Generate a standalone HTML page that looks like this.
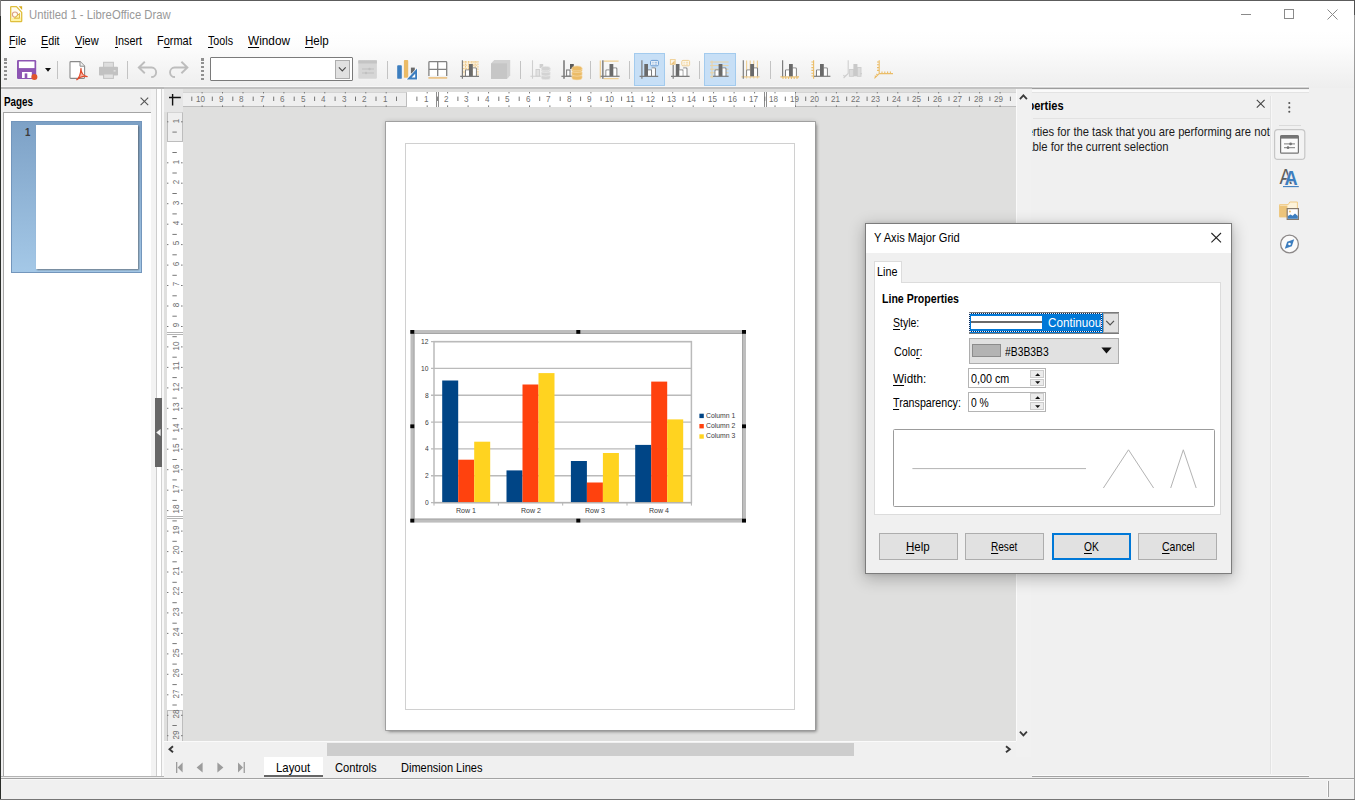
<!DOCTYPE html>
<html>
<head>
<meta charset="utf-8">
<title>Untitled 1 - LibreOffice Draw</title>
<style>
*{box-sizing:border-box;margin:0;padding:0}
html,body{width:1355px;height:800px;overflow:hidden;background:#f0f0f0;font-family:"Liberation Sans",sans-serif;font-size:12px;color:#000}
.abs{position:absolute}
#win{position:absolute;left:0;top:0;width:1355px;height:800px;background:#f0f0f0;overflow:hidden}
.t{position:absolute;white-space:nowrap;transform-origin:0 0;line-height:normal}
.t u{text-decoration:underline;text-decoration-thickness:1px;text-underline-offset:1.5px}
.sep{position:absolute;top:61px;width:1px;height:18px;background:#c3c3c3}
svg{position:absolute;overflow:visible}
</style>
</head>
<body>
<div id="win">
<!-- TITLEBAR / MENUBAR -->
<div class="abs" style="left:1px;top:1px;width:1353px;height:29px;background:#ffffff;"></div>
<div class="abs" style="left:1px;top:30px;width:1353px;height:58px;background:linear-gradient(#ffffff 0%,#fdfdfd 25%,#f4f4f4 70%,#eeeeee 100%);"></div>
<svg style="left:9px;top:5px" width="15" height="18" viewBox="0 0 15 18">
<path d="M1.7 2.2 Q1.7 1.6 2.3 1.6 H7.5 L12.7 7.4 V16 Q12.7 16.7 12 16.7 H2.4 Q1.7 16.7 1.7 16 Z" fill="#fffdf0" stroke="#dfbe3c" stroke-width="1.3" stroke-linejoin="round"/>
<path d="M2.5 12.6 H12 V16 H2.5 Z" fill="#fff4a4"/>
<path d="M9.7 1.3 H13.1 V5.1 Z" fill="#d6ae22"/>
<circle cx="6" cy="9.6" r="2.6" fill="none" stroke="#dba088" stroke-width="1.1"/>
<path d="M5.4 13.2 H10.6 V8.4 Z" fill="#fdf1a8" stroke="#dcb73a" stroke-width="1"/>
</svg>
<span class="t" style="left:29.2px;top:8.0px;font-size:12.2px;color:#999999;transform:scaleX(0.927);">Untitled 1 - LibreOffice Draw</span>
<div class="abs" style="left:1241px;top:14px;width:10px;height:1px;background:#8a8a8a;"></div>
<div class="abs" style="left:1284px;top:9px;width:10px;height:10px;border:1px solid #8a8a8a"></div>
<svg style="left:1327px;top:9px" width="11" height="11" viewBox="0 0 11 11"><path d="M0.5 0.5 L10.5 10.5 M10.5 0.5 L0.5 10.5" stroke="#8a8a8a" stroke-width="1" fill="none"/></svg>
<span class="t" style="left:8.8px;top:34.0px;font-size:12.2px;color:#000;transform:scaleX(0.875);"><u>F</u>ile</span>
<span class="t" style="left:41.2px;top:34.0px;font-size:12.2px;color:#000;transform:scaleX(0.885);"><u>E</u>dit</span>
<span class="t" style="left:75.3px;top:34.0px;font-size:12.2px;color:#000;transform:scaleX(0.900);"><u>V</u>iew</span>
<span class="t" style="left:114.6px;top:34.0px;font-size:12.2px;color:#000;transform:scaleX(0.888);"><u>I</u>nsert</span>
<span class="t" style="left:157.2px;top:34.0px;font-size:12.2px;color:#000;transform:scaleX(0.898);">F<u>o</u>rmat</span>
<span class="t" style="left:207.6px;top:34.0px;font-size:12.2px;color:#000;transform:scaleX(0.878);"><u>T</u>ools</span>
<span class="t" style="left:248.0px;top:34.0px;font-size:12.2px;color:#000;transform:scaleX(0.968);"><u>W</u>indow</span>
<span class="t" style="left:305.0px;top:34.0px;font-size:12.2px;color:#000;transform:scaleX(0.949);"><u>H</u>elp</span>
<!-- TOOLBAR -->
<div class="abs" style="left:1px;top:86px;width:1307px;height:1px;background:#f7f7f7;"></div>
<div class="abs" style="left:1px;top:87px;width:1031px;height:2px;background:#c2c2c2;"></div>
<div class="abs" style="left:1px;top:87px;width:163px;height:2px;background:#b8b8b8;"></div>
<div class="abs" style="left:1032px;top:87px;width:276.5px;height:1px;background:#d2d2d2;"></div>
<div class="abs" style="left:1032px;top:88px;width:276.5px;height:1px;background:#9c9c9c;"></div>
<div class="abs" style="left:4px;top:58.4px;width:2.6px;height:2.2px;background:#909090;"></div>
<div class="abs" style="left:4px;top:62.25px;width:2.6px;height:2.2px;background:#909090;"></div>
<div class="abs" style="left:4px;top:66.1px;width:2.6px;height:2.2px;background:#909090;"></div>
<div class="abs" style="left:4px;top:69.95px;width:2.6px;height:2.2px;background:#909090;"></div>
<div class="abs" style="left:4px;top:73.8px;width:2.6px;height:2.2px;background:#909090;"></div>
<div class="abs" style="left:4px;top:77.65px;width:2.6px;height:2.2px;background:#909090;"></div>
<div class="abs" style="left:201px;top:58.4px;width:2.6px;height:2.2px;background:#909090;"></div>
<div class="abs" style="left:201px;top:62.25px;width:2.6px;height:2.2px;background:#909090;"></div>
<div class="abs" style="left:201px;top:66.1px;width:2.6px;height:2.2px;background:#909090;"></div>
<div class="abs" style="left:201px;top:69.95px;width:2.6px;height:2.2px;background:#909090;"></div>
<div class="abs" style="left:201px;top:73.8px;width:2.6px;height:2.2px;background:#909090;"></div>
<div class="abs" style="left:201px;top:77.65px;width:2.6px;height:2.2px;background:#909090;"></div>
<div class="sep" style="left:57px"></div>
<div class="sep" style="left:127px"></div>
<div class="sep" style="left:387px"></div>
<div class="sep" style="left:520px"></div>
<div class="sep" style="left:590px"></div>
<div class="sep" style="left:629px"></div>
<div class="sep" style="left:699px"></div>
<div class="sep" style="left:770px"></div>
<div class="abs" style="left:634px;top:53px;width:31px;height:32.5px;background:#c7dff6;border:1px solid #a3cbee"></div>
<div class="abs" style="left:704px;top:53px;width:31.5px;height:32.5px;background:#c7dff6;border:1px solid #a3cbee"></div>
<div class="abs" style="left:209.6px;top:57.4px;width:143.4px;height:23.6px;background:#fff;border:1px solid #7a7a7a;border-radius:1px"></div>
<div class="abs" style="left:334.5px;top:59.8px;width:15.6px;height:19px;background:#e1e1e1;border:1px solid #adadad"></div>
<svg style="left:0;top:0" width="1355" height="90" viewBox="0 0 1355 90">
<path d="M338.9 67.4 L342.3 71 L345.7 67.4" fill="none" stroke="#4a4a4a" stroke-width="1.1"/>
<rect x="17" y="60" width="19.2" height="19" rx="1.2" fill="#8d55b3"/><rect x="18.9" y="61.5" width="15.6" height="6.6" fill="#fff"/><rect x="22" y="72" width="9.8" height="6" fill="#fff"/><rect x="24.7" y="73.4" width="2.6" height="4.6" fill="#8d55b3"/><circle cx="34.4" cy="77" r="3" fill="#e0542c"/>
<path d="M45 68 H51 L48 71.8 Z" fill="#111"/>
<path d="M70 62.4 Q70 61.6 70.8 61.6 H80 L84.6 66.2 V77.6 Q84.6 78.4 83.8 78.4 H70.8 Q70 78.4 70 77.6 Z" fill="#fff" stroke="#8a8a8a" stroke-width="1.1"/><path d="M80 61.8 V66.2 H84.4" fill="#f4f4f4" stroke="#8a8a8a" stroke-width="1"/><path d="M76.4 80 C79.4 77.4 81 73 81 68.4 C81 72.6 83.2 75.6 87.2 76.6 C83.2 75.6 79.6 77 76.4 80 M80.9 68.4 C80.9 72 80.2 74 79.4 76.4" fill="#f5b5a5" stroke="#e0492a" stroke-width="1.1" stroke-linejoin="round"/>
<rect x="103.6" y="62.3" width="9.8" height="6" fill="#dedede" stroke="#c2c2c2" stroke-width="1"/><rect x="99" y="66.8" width="19" height="8.8" rx="0.8" fill="#c2c2c2"/><rect x="103.6" y="74" width="9.8" height="4.4" fill="#e2e2e2" stroke="#c2c2c2" stroke-width="1"/><rect x="113.6" y="70.4" width="2" height="1" fill="#eee"/>
<path d="M144.8 61.8 L138.8 67.5 L144.8 73.3 M138.8 67.5 H151.6 A4.7 4.7 0 0 1 151.2 77" fill="none" stroke="#bdbdbd" stroke-width="1.9"/><path d="M181.4 61.8 L187.4 67.5 L181.4 73.3 M187.4 67.5 H174.6 A4.7 4.7 0 0 0 175 77" fill="none" stroke="#bdbdbd" stroke-width="1.9"/>
<rect x="358.3" y="60.3" width="18.6" height="18.4" rx="1" fill="#d6d6d6"/><rect x="358.3" y="60.3" width="18.6" height="3.2" fill="#c4c4c4"/><path d="M362 69 H374 M362 73 H374" stroke="#c0c0c0" stroke-width="1"/><circle cx="369.5" cy="69" r="1.2" fill="#c0c0c0"/><circle cx="366" cy="73" r="1.2" fill="#c0c0c0"/>
<rect x="397.2" y="65.2" width="4.6" height="13.6" rx="0.9" fill="#3d7ebf"/><rect x="403.9" y="60" width="4.3" height="17.8" rx="0.9" fill="#ebbb66"/><rect x="410.9" y="67.6" width="3.9" height="6" fill="#696969"/><path d="M405.4 80 L417.6 67 V80 Z" fill="#fff"/><path d="M406.8 79.4 L417 68.6 V79.4 Z M411.6 77.6 H415.2 V73.8 Z" fill="#3d7ebf" fill-rule="evenodd"/>
<rect x="428.8" y="61.6" width="18" height="14" fill="#fff"/><path d="M428.9 76 V62.4 Q428.9 61.6 429.7 61.6 H445.9 Q446.7 61.6 446.7 62.4 V76 M437.7 61.6 V76 M428.9 69.3 H446.7" fill="none" stroke="#828282" stroke-width="1.3"/><rect x="428.4" y="77" width="18.8" height="1.8" fill="#ebc58c"/>
<rect x="463" y="61" width="15" height="15" fill="#fbf1dd"/><path d="M465.5 61 V76 M468.5 61 V76 M472 61 V76 M475.2 61 V76 M478 61 V76 M463 62 H478 M463 65.2 H478 M463 68.6 H478 M463 72 H478" stroke="#efc98a" stroke-width="1" stroke-dasharray="1.6 0.9"/><path d="M465.5 76.3 V70.6 Q465.5 70 466.1 70 H469" fill="#fff" stroke="#7d7d7d" stroke-width="1.1"/><rect x="466" y="70.6" width="3" height="5.6" fill="#fff"/><path d="M472.6 68 H475.6 Q476.3 68 476.3 68.7 V76.3" fill="#fff" stroke="#7d7d7d" stroke-width="1.1"/><rect x="473" y="68.6" width="2.7" height="7.6" fill="#fff"/><rect x="469" y="64" width="3.8" height="12.3" fill="#6a6a6a"/><path d="M462.4 60.3 V78.8 M460.2 76.3 H479" stroke="#7d7d7d" stroke-width="1.2" fill="none"/>
<path d="M491 63.4 L494.2 60 H510.2 V75.6 L507 78.9 H491 Z" fill="#d2d2d2"/><rect x="491" y="63.4" width="16" height="15.5" fill="#c6c6c6"/>
<path d="M532.5 60.3 V78.8 M530.4 76.3 H541" stroke="#cfcfcf" stroke-width="1.1"/><rect x="536" y="69.5" width="3.6" height="6.6" fill="#e2e2e2" stroke="#cfcfcf" stroke-width="1"/><rect x="539.6" y="64" width="3.6" height="4" fill="#cfcfcf"/><path d="M541.2 75.7 v2.2 a4.55 1.9 0 0 0 9.1 0 v-2.2 z" fill="#d3d3d3" stroke="#ececec" stroke-width="0.6"/><path d="M541.2 72 v2.2 a4.55 1.9 0 0 0 9.1 0 v-2.2 z" fill="#d3d3d3" stroke="#ececec" stroke-width="0.6"/><path d="M541.2 68.3 v2.2 a4.55 1.9 0 0 0 9.1 0 v-2.2 z" fill="#d3d3d3" stroke="#ececec" stroke-width="0.6"/><ellipse cx="545.75" cy="68.6" rx="4.55" ry="2.3" fill="#d3d3d3" stroke="#ececec" stroke-width="0.6"/>
<path d="M564 60.3 V78.8" stroke="#8a8a8a" stroke-width="1.8"/><path d="M561.4 76.3 H573" stroke="#7d7d7d" stroke-width="1.2"/><rect x="566.6" y="70" width="3.4" height="6" fill="#fff" stroke="#7d7d7d" stroke-width="1.1"/><rect x="570" y="64" width="3.8" height="5" fill="#5a5a5a"/><path d="M571.9 75.7 v2.2 a5.1 2 0 0 0 10.2 0 v-2.2 z" fill="#ebbb66" stroke="#f6deb0" stroke-width="0.6"/><path d="M571.9 72 v2.2 a5.1 2 0 0 0 10.2 0 v-2.2 z" fill="#ebbb66" stroke="#f6deb0" stroke-width="0.6"/><path d="M571.9 68.3 v2.2 a5.1 2 0 0 0 10.2 0 v-2.2 z" fill="#ebbb66" stroke="#f6deb0" stroke-width="0.6"/><ellipse cx="577" cy="68.4" rx="5.1" ry="2.5" fill="#ebbb66" stroke="#f6deb0" stroke-width="0.6"/>
<path d="M600.3 60.6 V78.6 M603.6 61.2 H618.6 M603.6 78.6 H618.6" stroke="#f0cf92" stroke-width="1.2" fill="none"/><path d="M606.0 76.3 V70.6 Q606.0 70 606.6 70 H609.5" fill="#fff" stroke="#7d7d7d" stroke-width="1.1"/><rect x="606.5" y="70.6" width="3" height="5.6" fill="#fff"/><path d="M613.1 68 H616.1 Q616.8 68 616.8 68.7 V76.3" fill="#fff" stroke="#7d7d7d" stroke-width="1.1"/><rect x="613.5" y="68.6" width="2.7" height="7.6" fill="#fff"/><rect x="609.5" y="64" width="3.8" height="12.3" fill="#6a6a6a"/><path d="M602.8 60.3 V78.8" stroke="#8a8a8a" stroke-width="1.7"/><path d="M600.6 76.3 H619.6" stroke="#7d7d7d" stroke-width="1.2"/>
<rect x="644.3" y="64" width="3.7" height="12.3" fill="#6a6a6a"/><path d="M648.0 70 H651.5 V76.3" fill="#fff" stroke="#7d7d7d" stroke-width="1.1"/><rect x="648.0" y="70.6" width="3" height="5.6" fill="#fff"/><path d="M651.6999999999999 68 H654.6999999999999 Q655.4 68 655.4 68.7 V76.3" fill="#fff" stroke="#7d7d7d" stroke-width="1.1"/><rect x="652.0999999999999" y="68.6" width="2.7" height="7.6" fill="#fff"/><path d="M641.9 60.3 V78.8 M639.6 76.3 H658.2" stroke="#7d7d7d" stroke-width="1.2"/><rect x="650.6" y="60.4" width="7.8" height="5.4" rx="1.2" fill="#eef4fb" stroke="#6a9bd0" stroke-width="1"/><path d="M652.3 62.3 H653.6 M654.6 62.3 H657 M652.3 64.1 H653.6 M654.6 64.1 H657" stroke="#7aa6d6" stroke-width="0.8"/>
<rect x="675.8" y="64" width="3.7" height="12.3" fill="#6a6a6a"/><path d="M679.5 70 H683.0 V76.3" fill="#fff" stroke="#7d7d7d" stroke-width="1.1"/><rect x="679.5" y="70.6" width="3" height="5.6" fill="#fff"/><path d="M683.1999999999999 68 H686.1999999999999 Q686.9 68 686.9 68.7 V76.3" fill="#fff" stroke="#7d7d7d" stroke-width="1.1"/><rect x="683.5999999999999" y="68.6" width="2.7" height="7.6" fill="#fff"/><path d="M673.2 65 V78.8 M671 76.3 H689.6" stroke="#7d7d7d" stroke-width="1.2"/><rect x="670.4" y="59.6" width="4.8" height="4.8" fill="#fdf6e6" stroke="#efcf94" stroke-width="1"/><path d="M674.6 60.6 V64 H671.2 Z" fill="#ecc27a"/><rect x="681.8" y="60.4" width="7.8" height="5.4" rx="1.2" fill="#fdf8ee" stroke="#efcf94" stroke-width="1"/><path d="M683.5 62.3 H684.8 M685.8 62.3 H688.2 M683.5 64.1 H684.8 M685.8 64.1 H688.2" stroke="#efcf94" stroke-width="0.8"/>
<path d="M710 62 H728.6 M710 65.6 H728.6 M710 69.2 H728.6 M710 72.8 H728.6 M712 60.6 V78.4" stroke="#ead2a2" stroke-width="1"/><path d="M710 76.8 H713" stroke="#ead2a2" stroke-width="1"/><path d="M715.1 76.3 V70.6 Q715.1 70 715.7 70 H718.6" fill="#fff" stroke="#7d7d7d" stroke-width="1.1"/><rect x="715.6" y="70.6" width="3" height="5.6" fill="#fff"/><path d="M722.2 68 H725.2 Q725.9 68 725.9 68.7 V76.3" fill="#fff" stroke="#7d7d7d" stroke-width="1.1"/><rect x="722.6" y="68.6" width="2.7" height="7.6" fill="#fff"/><rect x="718.6" y="64" width="3.8" height="12.3" fill="#6a6a6a"/><path d="M713 76.3 H728.6" stroke="#7d7d7d" stroke-width="1.2"/>
<path d="M746.6 60.4 V78.4 M750.2 60.4 V78.4 M753.8 60.4 V78.4 M757.4 60.4 V78.4 M741.4 76.9 H759.6" stroke="#f0cf92" stroke-width="1.1"/><path d="M746.7 76.3 V70.6 Q746.7 70 747.3000000000001 70 H750.2" fill="#fff" stroke="#7d7d7d" stroke-width="1.1"/><rect x="747.2" y="70.6" width="3" height="5.6" fill="#fff"/><path d="M753.8000000000001 68 H756.8000000000001 Q757.5 68 757.5 68.7 V76.3" fill="#fff" stroke="#7d7d7d" stroke-width="1.1"/><rect x="754.2" y="68.6" width="2.7" height="7.6" fill="#fff"/><rect x="750.2" y="64" width="3.8" height="12.3" fill="#6a6a6a"/><path d="M743.3 60.3 V78.8" stroke="#7d7d7d" stroke-width="1.2"/>
<path d="M780.4 76.9 H799 M783 77 V79 M785.8 77 V79 M788.6 77 V79 M791.4 77 V79 M794.2 77 V79 M797 77 V79" stroke="#ebbd68" stroke-width="1.1"/><path d="M785.5 76.3 V70.6 Q785.5 70 786.1 70 H789" fill="#fff" stroke="#7d7d7d" stroke-width="1.1"/><rect x="786" y="70.6" width="3" height="5.6" fill="#fff"/><path d="M792.6 68 H795.6 Q796.3 68 796.3 68.7 V76.3" fill="#fff" stroke="#7d7d7d" stroke-width="1.1"/><rect x="793" y="68.6" width="2.7" height="7.6" fill="#fff"/><rect x="789" y="64" width="3.8" height="12.3" fill="#6a6a6a"/><path d="M782.6 60.3 V76.6" stroke="#7d7d7d" stroke-width="1.2"/>
<path d="M813.6 60.3 V78.8 M811.4 62 H813.6 M811.4 64.8 H813.6 M811.4 67.6 H813.6 M811.4 70.4 H813.6 M811.4 73.2 H813.6 M811.4 76 H813.6" stroke="#ebbd68" stroke-width="1.1"/><path d="M816.5 76.3 V70.6 Q816.5 70 817.1 70 H820" fill="#fff" stroke="#7d7d7d" stroke-width="1.1"/><rect x="817" y="70.6" width="3" height="5.6" fill="#fff"/><path d="M823.6 68 H826.6 Q827.3 68 827.3 68.7 V76.3" fill="#fff" stroke="#7d7d7d" stroke-width="1.1"/><rect x="824" y="68.6" width="2.7" height="7.6" fill="#fff"/><rect x="820" y="64" width="3.8" height="12.3" fill="#6a6a6a"/><path d="M814 76.3 H830.4" stroke="#7d7d7d" stroke-width="1.2"/>
<rect x="849.4" y="69.5" width="4" height="6.8" fill="#dcdcdc" stroke="#cfcfcf" stroke-width="1"/><rect x="857.4" y="67.5" width="3.6" height="8.8" fill="#dcdcdc" stroke="#cfcfcf" stroke-width="1"/><rect x="853.4" y="64" width="4" height="12.3" fill="#c9c9c9"/><path d="M848.2 60.3 V73.4 L843.6 78 M843.4 75.2 l1.3 1.5 l1.3 -1.5 M860 73.6 H862" stroke="#cfcfcf" stroke-width="1.1" fill="none"/>
<path d="M879.2 60.3 V73.6 H893 M879.2 73.6 L874.4 78.4 M877 62 H879.2 M877 64.8 H879.2 M877 67.6 H879.2 M877 70.4 H879.2 M882 73.6 V71.6 M884.8 73.6 V71.6 M887.6 73.6 V71.6 M890.4 73.6 V71.6 M877.6 75.2 L876.4 74 M876 76.8 L874.8 75.6" stroke="#ebbd68" stroke-width="1.1" fill="none"/>
</svg>
<!-- LEFT PANE -->
<span class="t" style="left:4.2px;top:95.0px;font-size:12.2px;color:#000;transform:scaleX(0.810);font-weight:bold;">Pages</span>
<svg style="left:140px;top:97px" width="9" height="9" viewBox="0 0 9 9"><path d="M0.6 0.6 L8.2 8.2 M8.2 0.6 L0.6 8.2" stroke="#555" stroke-width="1.1" fill="none"/></svg>
<div class="abs" style="left:3px;top:112px;width:148.3px;height:663.6px;background:#ffffff;border-top:1px solid #a5a5a5;border-left:1px solid #a9a9a9"></div>
<div class="abs" style="left:1px;top:775.6px;width:162.6px;height:1px;background:#b4b4b4;"></div>
<div class="abs" style="left:11.2px;top:120.8px;width:131.2px;height:152.6px;background:linear-gradient(#7da1c6,#a4c8e7);border:1px solid #7396bc"></div>
<div class="abs" style="left:35.5px;top:124.8px;width:102.8px;height:144.6px;background:#ffffff;box-shadow:1px 1px 1.5px rgba(60,60,60,.55)"></div>
<span class="t" style="left:24.8px;top:125.0px;font-size:11.6px;color:#3c3c3c;transform:scaleX(0.837);font-weight:bold;">1</span>
<div class="abs" style="left:151.3px;top:89px;width:13px;height:686.6px;background:#f3f3f3;"></div>
<div class="abs" style="left:155.7px;top:89px;width:1px;height:686.6px;background:#cdcdcd;"></div>
<div class="abs" style="left:156.7px;top:89px;width:4.5px;height:686.6px;background:#ffffff;"></div>
<div class="abs" style="left:161.2px;top:89px;width:1.2px;height:686.6px;background:#d2d2d2;"></div>
<div class="abs" style="left:162.4px;top:89px;width:1.6px;height:686.6px;background:#f8f8f8;"></div>
<div class="abs" style="left:155px;top:398px;width:7px;height:69px;background:#666666;"></div>
<svg style="left:155px;top:428px" width="7" height="9" viewBox="0 0 7 9"><path d="M5.6 1 V8 L1.2 4.5 Z" fill="#f4f4f4"/></svg>
<!-- WORKSPACE -->
<div class="abs" style="left:164px;top:89px;width:852px;height:652px;background:#dfdfde;"></div>
<div class="abs" style="left:164px;top:89px;width:19px;height:23px;background:#e6e6e6;"></div>
<svg style="left:168px;top:93px" width="15" height="14" viewBox="0 0 15 14"><path d="M1 4.5 H12.8 M4.6 1 V12.5" stroke="#111" stroke-width="1.4" fill="none"/></svg>
<div class="abs" style="left:183px;top:92px;width:833px;height:15px;background:#ffffff;"></div>
<div class="abs" style="left:183px;top:92px;width:223.5px;height:15px;background:#efefef;border:1px solid #bdbdbd;border-left:none;border-top-color:#d4d4d4"></div>
<div class="abs" style="left:794.5px;top:92px;width:221.5px;height:15px;background:#efefef;border:1px solid #bdbdbd;border-right:none;border-top-color:#d4d4d4"></div>
<div class="abs" style="left:436px;top:92px;width:1px;height:15px;background:#8e8e8e;"></div>
<div class="abs" style="left:438px;top:92px;width:1px;height:15px;background:#8e8e8e;"></div>
<div class="abs" style="left:764px;top:92px;width:1px;height:15px;background:#8e8e8e;"></div>
<div class="abs" style="left:766px;top:92px;width:1px;height:15px;background:#8e8e8e;"></div>
<span class="t" style="left:196.2px;top:93.0px;font-size:9.6px;color:#727272;transform:scaleX(0.843);">10</span>
<span class="t" style="left:218.9px;top:93.0px;font-size:9.6px;color:#727272;transform:scaleX(0.843);">9</span>
<span class="t" style="left:239.3px;top:93.0px;font-size:9.6px;color:#727272;transform:scaleX(0.843);">8</span>
<span class="t" style="left:259.8px;top:93.0px;font-size:9.6px;color:#727272;transform:scaleX(0.843);">7</span>
<span class="t" style="left:280.3px;top:93.0px;font-size:9.6px;color:#727272;transform:scaleX(0.843);">6</span>
<span class="t" style="left:300.7px;top:93.0px;font-size:9.6px;color:#727272;transform:scaleX(0.843);">5</span>
<span class="t" style="left:321.2px;top:93.0px;font-size:9.6px;color:#727272;transform:scaleX(0.843);">4</span>
<span class="t" style="left:341.7px;top:93.0px;font-size:9.6px;color:#727272;transform:scaleX(0.843);">3</span>
<span class="t" style="left:362.1px;top:93.0px;font-size:9.6px;color:#727272;transform:scaleX(0.843);">2</span>
<span class="t" style="left:382.6px;top:93.0px;font-size:9.6px;color:#727272;transform:scaleX(0.843);">1</span>
<span class="t" style="left:423.5px;top:93.0px;font-size:9.6px;color:#727272;transform:scaleX(0.843);">1</span>
<span class="t" style="left:444.0px;top:93.0px;font-size:9.6px;color:#727272;transform:scaleX(0.843);">2</span>
<span class="t" style="left:464.4px;top:93.0px;font-size:9.6px;color:#727272;transform:scaleX(0.843);">3</span>
<span class="t" style="left:484.9px;top:93.0px;font-size:9.6px;color:#727272;transform:scaleX(0.843);">4</span>
<span class="t" style="left:505.4px;top:93.0px;font-size:9.6px;color:#727272;transform:scaleX(0.843);">5</span>
<span class="t" style="left:525.8px;top:93.0px;font-size:9.6px;color:#727272;transform:scaleX(0.843);">6</span>
<span class="t" style="left:546.3px;top:93.0px;font-size:9.6px;color:#727272;transform:scaleX(0.843);">7</span>
<span class="t" style="left:566.8px;top:93.0px;font-size:9.6px;color:#727272;transform:scaleX(0.843);">8</span>
<span class="t" style="left:587.2px;top:93.0px;font-size:9.6px;color:#727272;transform:scaleX(0.843);">9</span>
<span class="t" style="left:605.4px;top:93.0px;font-size:9.6px;color:#727272;transform:scaleX(0.843);">10</span>
<span class="t" style="left:625.9px;top:93.0px;font-size:9.6px;color:#727272;transform:scaleX(0.903);">11</span>
<span class="t" style="left:646.4px;top:93.0px;font-size:9.6px;color:#727272;transform:scaleX(0.843);">12</span>
<span class="t" style="left:666.8px;top:93.0px;font-size:9.6px;color:#727272;transform:scaleX(0.843);">13</span>
<span class="t" style="left:687.3px;top:93.0px;font-size:9.6px;color:#727272;transform:scaleX(0.843);">14</span>
<span class="t" style="left:707.7px;top:93.0px;font-size:9.6px;color:#727272;transform:scaleX(0.843);">15</span>
<span class="t" style="left:728.2px;top:93.0px;font-size:9.6px;color:#727272;transform:scaleX(0.843);">16</span>
<span class="t" style="left:748.7px;top:93.0px;font-size:9.6px;color:#727272;transform:scaleX(0.843);">17</span>
<span class="t" style="left:769.1px;top:93.0px;font-size:9.6px;color:#727272;transform:scaleX(0.843);">18</span>
<span class="t" style="left:789.6px;top:93.0px;font-size:9.6px;color:#727272;transform:scaleX(0.843);">19</span>
<span class="t" style="left:810.1px;top:93.0px;font-size:9.6px;color:#727272;transform:scaleX(0.843);">20</span>
<span class="t" style="left:830.5px;top:93.0px;font-size:9.6px;color:#727272;transform:scaleX(0.843);">21</span>
<span class="t" style="left:851.0px;top:93.0px;font-size:9.6px;color:#727272;transform:scaleX(0.843);">22</span>
<span class="t" style="left:871.4px;top:93.0px;font-size:9.6px;color:#727272;transform:scaleX(0.843);">23</span>
<span class="t" style="left:891.9px;top:93.0px;font-size:9.6px;color:#727272;transform:scaleX(0.843);">24</span>
<span class="t" style="left:912.4px;top:93.0px;font-size:9.6px;color:#727272;transform:scaleX(0.843);">25</span>
<span class="t" style="left:932.8px;top:93.0px;font-size:9.6px;color:#727272;transform:scaleX(0.843);">26</span>
<span class="t" style="left:953.3px;top:93.0px;font-size:9.6px;color:#727272;transform:scaleX(0.843);">27</span>
<span class="t" style="left:973.8px;top:93.0px;font-size:9.6px;color:#727272;transform:scaleX(0.843);">28</span>
<span class="t" style="left:994.2px;top:93.0px;font-size:9.6px;color:#727272;transform:scaleX(0.843);">29</span>
<div class="abs" style="left:166.5px;top:112px;width:16.5px;height:629px;background:#ffffff;"></div>
<div class="abs" style="left:166.5px;top:112px;width:16.5px;height:30px;background:#efefef;border:1px solid #bdbdbd;border-top-color:#d4d4d4"></div>
<div class="abs" style="left:166.5px;top:710px;width:16.5px;height:31px;background:#efefef;border:1px solid #bdbdbd;border-bottom:none"></div>
<div class="abs" style="left:166.5px;top:332.1px;width:16.5px;height:1px;background:#b4b4b4;"></div>
<div class="abs" style="left:166.5px;top:334.4px;width:16.5px;height:1px;background:#b4b4b4;"></div>
<div class="abs" style="left:166.5px;top:515.9px;width:16.5px;height:1px;background:#b4b4b4;"></div>
<div class="abs" style="left:166.5px;top:517.9px;width:16.5px;height:1px;background:#b4b4b4;"></div>
<svg style="left:0;top:0" width="1355" height="800" viewBox="0 0 1355 800">
<path d="M191.8 96.6 v4.4 M202.1 92 v1.4 M202.1 105.4 v1.6 M212.3 96.6 v4.4 M222.5 92 v1.4 M222.5 105.4 v1.6 M232.8 96.6 v4.4 M243.0 92 v1.4 M243.0 105.4 v1.6 M253.2 96.6 v4.4 M263.5 92 v1.4 M263.5 105.4 v1.6 M273.7 96.6 v4.4 M283.9 92 v1.4 M283.9 105.4 v1.6 M294.2 96.6 v4.4 M304.4 92 v1.4 M304.4 105.4 v1.6 M314.6 96.6 v4.4 M324.8 92 v1.4 M324.8 105.4 v1.6 M335.1 96.6 v4.4 M345.3 92 v1.4 M345.3 105.4 v1.6 M355.5 96.6 v4.4 M365.8 92 v1.4 M365.8 105.4 v1.6 M376.0 96.6 v4.4 M386.2 92 v1.4 M386.2 105.4 v1.6 M396.5 96.6 v4.4 M416.9 96.6 v4.4 M427.2 92 v1.4 M427.2 105.4 v1.6 M437.4 96.6 v4.4 M447.6 92 v1.4 M447.6 105.4 v1.6 M457.9 96.6 v4.4 M468.1 92 v1.4 M468.1 105.4 v1.6 M478.3 96.6 v4.4 M488.6 92 v1.4 M488.6 105.4 v1.6 M498.8 96.6 v4.4 M509.0 92 v1.4 M509.0 105.4 v1.6 M519.2 96.6 v4.4 M529.5 92 v1.4 M529.5 105.4 v1.6 M539.7 96.6 v4.4 M549.9 92 v1.4 M549.9 105.4 v1.6 M560.2 96.6 v4.4 M570.4 92 v1.4 M570.4 105.4 v1.6 M580.6 96.6 v4.4 M590.9 92 v1.4 M590.9 105.4 v1.6 M601.1 96.6 v4.4 M611.3 92 v1.4 M611.3 105.4 v1.6 M621.6 96.6 v4.4 M631.8 92 v1.4 M631.8 105.4 v1.6 M642.0 96.6 v4.4 M652.3 92 v1.4 M652.3 105.4 v1.6 M662.5 96.6 v4.4 M672.7 92 v1.4 M672.7 105.4 v1.6 M683.0 96.6 v4.4 M693.2 92 v1.4 M693.2 105.4 v1.6 M703.4 96.6 v4.4 M713.6 92 v1.4 M713.6 105.4 v1.6 M723.9 96.6 v4.4 M734.1 92 v1.4 M734.1 105.4 v1.6 M744.3 96.6 v4.4 M754.6 92 v1.4 M754.6 105.4 v1.6 M764.8 96.6 v4.4 M775.0 92 v1.4 M775.0 105.4 v1.6 M785.3 96.6 v4.4 M795.5 92 v1.4 M795.5 105.4 v1.6 M805.7 96.6 v4.4 M816.0 92 v1.4 M816.0 105.4 v1.6 M826.2 96.6 v4.4 M836.4 92 v1.4 M836.4 105.4 v1.6 M846.7 96.6 v4.4 M856.9 92 v1.4 M856.9 105.4 v1.6 M867.1 96.6 v4.4 M877.3 92 v1.4 M877.3 105.4 v1.6 M887.6 96.6 v4.4 M897.8 92 v1.4 M897.8 105.4 v1.6 M908.0 96.6 v4.4 M918.3 92 v1.4 M918.3 105.4 v1.6 M928.5 96.6 v4.4 M938.7 92 v1.4 M938.7 105.4 v1.6 M949.0 96.6 v4.4 M959.2 92 v1.4 M959.2 105.4 v1.6 M969.4 96.6 v4.4 M979.7 92 v1.4 M979.7 105.4 v1.6 M989.9 96.6 v4.4 M1000.1 92 v1.4 M1000.1 105.4 v1.6 M1010.4 96.6 v4.4 " stroke="#777" stroke-width="1" fill="none"/>
<path d="M167 121.8 h1.4 M181 121.8 h1.6 M172.4 132.1 h4.4 M172.4 152.5 h4.4 M167 162.8 h1.4 M181 162.8 h1.6 M172.4 173.0 h4.4 M167 183.2 h1.4 M181 183.2 h1.6 M172.4 193.5 h4.4 M167 203.7 h1.4 M181 203.7 h1.6 M172.4 213.9 h4.4 M167 224.2 h1.4 M181 224.2 h1.6 M172.4 234.4 h4.4 M167 244.6 h1.4 M181 244.6 h1.6 M172.4 254.8 h4.4 M167 265.1 h1.4 M181 265.1 h1.6 M172.4 275.3 h4.4 M167 285.5 h1.4 M181 285.5 h1.6 M172.4 295.8 h4.4 M167 306.0 h1.4 M181 306.0 h1.6 M172.4 316.2 h4.4 M167 326.5 h1.4 M181 326.5 h1.6 M172.4 336.7 h4.4 M167 346.9 h1.4 M181 346.9 h1.6 M172.4 357.2 h4.4 M167 367.4 h1.4 M181 367.4 h1.6 M172.4 377.6 h4.4 M167 387.9 h1.4 M181 387.9 h1.6 M172.4 398.1 h4.4 M167 408.3 h1.4 M181 408.3 h1.6 M172.4 418.6 h4.4 M167 428.8 h1.4 M181 428.8 h1.6 M172.4 439.0 h4.4 M167 449.2 h1.4 M181 449.2 h1.6 M172.4 459.5 h4.4 M167 469.7 h1.4 M181 469.7 h1.6 M172.4 479.9 h4.4 M167 490.2 h1.4 M181 490.2 h1.6 M172.4 500.4 h4.4 M167 510.6 h1.4 M181 510.6 h1.6 M172.4 520.9 h4.4 M167 531.1 h1.4 M181 531.1 h1.6 M172.4 541.3 h4.4 M167 551.6 h1.4 M181 551.6 h1.6 M172.4 561.8 h4.4 M167 572.0 h1.4 M181 572.0 h1.6 M172.4 582.3 h4.4 M167 592.5 h1.4 M181 592.5 h1.6 M172.4 602.7 h4.4 M167 612.9 h1.4 M181 612.9 h1.6 M172.4 623.2 h4.4 M167 633.4 h1.4 M181 633.4 h1.6 M172.4 643.6 h4.4 M167 653.9 h1.4 M181 653.9 h1.6 M172.4 664.1 h4.4 M167 674.3 h1.4 M181 674.3 h1.6 M172.4 684.6 h4.4 M167 694.8 h1.4 M181 694.8 h1.6 M172.4 705.0 h4.4 M167 715.3 h1.4 M181 715.3 h1.6 M172.4 725.5 h4.4 M167 735.7 h1.4 M181 735.7 h1.6 " stroke="#777" stroke-width="1" fill="none"/>
</svg>
<span class="t" style="left:174.6px;top:120.6px;font-size:9.8px;color:#6e6e6e;transform:translate(-50%,-50%) rotate(-90deg) scaleX(0.826);transform-origin:50% 50%">1</span>
<span class="t" style="left:174.6px;top:161.6px;font-size:9.8px;color:#6e6e6e;transform:translate(-50%,-50%) rotate(-90deg) scaleX(0.826);transform-origin:50% 50%">1</span>
<span class="t" style="left:174.6px;top:182.0px;font-size:9.8px;color:#6e6e6e;transform:translate(-50%,-50%) rotate(-90deg) scaleX(0.826);transform-origin:50% 50%">2</span>
<span class="t" style="left:174.6px;top:202.5px;font-size:9.8px;color:#6e6e6e;transform:translate(-50%,-50%) rotate(-90deg) scaleX(0.826);transform-origin:50% 50%">3</span>
<span class="t" style="left:174.6px;top:223.0px;font-size:9.8px;color:#6e6e6e;transform:translate(-50%,-50%) rotate(-90deg) scaleX(0.826);transform-origin:50% 50%">4</span>
<span class="t" style="left:174.6px;top:243.4px;font-size:9.8px;color:#6e6e6e;transform:translate(-50%,-50%) rotate(-90deg) scaleX(0.826);transform-origin:50% 50%">5</span>
<span class="t" style="left:174.6px;top:263.9px;font-size:9.8px;color:#6e6e6e;transform:translate(-50%,-50%) rotate(-90deg) scaleX(0.826);transform-origin:50% 50%">6</span>
<span class="t" style="left:174.6px;top:284.3px;font-size:9.8px;color:#6e6e6e;transform:translate(-50%,-50%) rotate(-90deg) scaleX(0.826);transform-origin:50% 50%">7</span>
<span class="t" style="left:174.6px;top:304.8px;font-size:9.8px;color:#6e6e6e;transform:translate(-50%,-50%) rotate(-90deg) scaleX(0.826);transform-origin:50% 50%">8</span>
<span class="t" style="left:174.6px;top:325.3px;font-size:9.8px;color:#6e6e6e;transform:translate(-50%,-50%) rotate(-90deg) scaleX(0.826);transform-origin:50% 50%">9</span>
<span class="t" style="left:174.6px;top:345.7px;font-size:9.8px;color:#6e6e6e;transform:translate(-50%,-50%) rotate(-90deg) scaleX(0.826);transform-origin:50% 50%">10</span>
<span class="t" style="left:174.6px;top:366.2px;font-size:9.8px;color:#6e6e6e;transform:translate(-50%,-50%) rotate(-90deg) scaleX(0.885);transform-origin:50% 50%">11</span>
<span class="t" style="left:174.6px;top:386.7px;font-size:9.8px;color:#6e6e6e;transform:translate(-50%,-50%) rotate(-90deg) scaleX(0.826);transform-origin:50% 50%">12</span>
<span class="t" style="left:174.6px;top:407.1px;font-size:9.8px;color:#6e6e6e;transform:translate(-50%,-50%) rotate(-90deg) scaleX(0.826);transform-origin:50% 50%">13</span>
<span class="t" style="left:174.6px;top:427.6px;font-size:9.8px;color:#6e6e6e;transform:translate(-50%,-50%) rotate(-90deg) scaleX(0.826);transform-origin:50% 50%">14</span>
<span class="t" style="left:174.6px;top:448.0px;font-size:9.8px;color:#6e6e6e;transform:translate(-50%,-50%) rotate(-90deg) scaleX(0.826);transform-origin:50% 50%">15</span>
<span class="t" style="left:174.6px;top:468.5px;font-size:9.8px;color:#6e6e6e;transform:translate(-50%,-50%) rotate(-90deg) scaleX(0.826);transform-origin:50% 50%">16</span>
<span class="t" style="left:174.6px;top:489.0px;font-size:9.8px;color:#6e6e6e;transform:translate(-50%,-50%) rotate(-90deg) scaleX(0.826);transform-origin:50% 50%">17</span>
<span class="t" style="left:174.6px;top:509.4px;font-size:9.8px;color:#6e6e6e;transform:translate(-50%,-50%) rotate(-90deg) scaleX(0.826);transform-origin:50% 50%">18</span>
<span class="t" style="left:174.6px;top:529.9px;font-size:9.8px;color:#6e6e6e;transform:translate(-50%,-50%) rotate(-90deg) scaleX(0.826);transform-origin:50% 50%">19</span>
<span class="t" style="left:174.6px;top:550.4px;font-size:9.8px;color:#6e6e6e;transform:translate(-50%,-50%) rotate(-90deg) scaleX(0.826);transform-origin:50% 50%">20</span>
<span class="t" style="left:174.6px;top:570.8px;font-size:9.8px;color:#6e6e6e;transform:translate(-50%,-50%) rotate(-90deg) scaleX(0.826);transform-origin:50% 50%">21</span>
<span class="t" style="left:174.6px;top:591.3px;font-size:9.8px;color:#6e6e6e;transform:translate(-50%,-50%) rotate(-90deg) scaleX(0.826);transform-origin:50% 50%">22</span>
<span class="t" style="left:174.6px;top:611.7px;font-size:9.8px;color:#6e6e6e;transform:translate(-50%,-50%) rotate(-90deg) scaleX(0.826);transform-origin:50% 50%">23</span>
<span class="t" style="left:174.6px;top:632.2px;font-size:9.8px;color:#6e6e6e;transform:translate(-50%,-50%) rotate(-90deg) scaleX(0.826);transform-origin:50% 50%">24</span>
<span class="t" style="left:174.6px;top:652.7px;font-size:9.8px;color:#6e6e6e;transform:translate(-50%,-50%) rotate(-90deg) scaleX(0.826);transform-origin:50% 50%">25</span>
<span class="t" style="left:174.6px;top:673.1px;font-size:9.8px;color:#6e6e6e;transform:translate(-50%,-50%) rotate(-90deg) scaleX(0.826);transform-origin:50% 50%">26</span>
<span class="t" style="left:174.6px;top:693.6px;font-size:9.8px;color:#6e6e6e;transform:translate(-50%,-50%) rotate(-90deg) scaleX(0.826);transform-origin:50% 50%">27</span>
<span class="t" style="left:174.6px;top:714.1px;font-size:9.8px;color:#6e6e6e;transform:translate(-50%,-50%) rotate(-90deg) scaleX(0.826);transform-origin:50% 50%">28</span>
<span class="t" style="left:174.6px;top:734.5px;font-size:9.8px;color:#6e6e6e;transform:translate(-50%,-50%) rotate(-90deg) scaleX(0.826);transform-origin:50% 50%">29</span>
<div class="abs" style="left:386px;top:122.4px;width:429px;height:607.4px;background:#ffffff;box-shadow:0 0 0 0.9px #9c9c9c,1.5px 1.5px 3px rgba(0,0,0,.40),0 0 5px rgba(0,0,0,.24)"></div>
<div class="abs" style="left:405.2px;top:142.6px;width:389.5px;height:567.3px;border:1px solid #d0d0d0"></div>
<div class="abs" style="left:1016px;top:89px;width:16px;height:668px;background:#f1f1f1;"></div>
<div class="abs" style="left:1016.2px;top:89px;width:1.2px;height:652px;background:#fafafa;"></div>
<svg style="left:1018.4px;top:93px" width="11" height="8" viewBox="0 0 11 8"><path d="M1.9 6.2 L5.4 2.4 L8.9 6.2" fill="none" stroke="#3a3a3a" stroke-width="1.8"/></svg>
<svg style="left:1018.4px;top:729.5px" width="11" height="8" viewBox="0 0 11 8"><path d="M1.9 1.6 L5.4 5.4 L8.9 1.6" fill="none" stroke="#3a3a3a" stroke-width="1.8"/></svg>
<div class="abs" style="left:164px;top:741px;width:852px;height:16px;background:#f0f0f0;"></div>
<div class="abs" style="left:164px;top:741px;width:852px;height:1.2px;background:#fafafa;"></div>
<div class="abs" style="left:326.5px;top:742.5px;width:527px;height:13.5px;background:#cdcdcd;"></div>
<svg style="left:167px;top:743px" width="8" height="12" viewBox="0 0 8 12"><path d="M6 3.3 L2.5 6.3 L6 9.3" fill="none" stroke="#383838" stroke-width="1.9"/></svg>
<svg style="left:1003px;top:743px" width="8" height="12" viewBox="0 0 8 12"><path d="M3 3.3 L6.8 6.3 L3 9.3" fill="none" stroke="#383838" stroke-width="1.9"/></svg>
<div class="abs" style="left:164px;top:757px;width:852px;height:20px;background:#f0f0f0;"></div>
<svg style="left:0;top:0" width="500" height="800" viewBox="0 0 500 800"><g fill="#9c9c9c"><rect x="176" y="762" width="1.3" height="11"/><path d="M182.6 762.4 V772.6 L177.6 767.5 Z"/><path d="M202.6 762.4 V772.6 L196.6 767.5 Z"/><path d="M217.4 762.4 V772.6 L223.4 767.5 Z"/><path d="M238 762.4 V772.6 L243 767.5 Z"/><rect x="243.6" y="762" width="1.3" height="11"/></g></svg>
<div class="abs" style="left:264px;top:757px;width:59px;height:18px;background:#ffffff;"></div>
<div class="abs" style="left:264px;top:775px;width:59px;height:2.8px;background:#666666;"></div>
<span class="t" style="left:275.8px;top:761.0px;font-size:12.2px;color:#000;transform:scaleX(0.934);">Layout</span>
<span class="t" style="left:334.8px;top:761.0px;font-size:12.2px;color:#000;transform:scaleX(0.916);">Controls</span>
<span class="t" style="left:401.3px;top:761.0px;font-size:12.2px;color:#000;transform:scaleX(0.904);">Dimension Lines</span>
<!-- CHART -->
<svg style="left:0;top:0" width="1355" height="800" viewBox="0 0 1355 800">
<rect x="412.5" y="332" width="331.5" height="188.6" fill="#ffffff" stroke="#bebebe" stroke-width="4"/>
<rect x="414" y="333.5" width="328.5" height="185.6" fill="none" stroke="#a6a6a6" stroke-width="1"/>
<path d="M431.0 502.6 H691.4 M431.0 475.8 H691.4 M431.0 448.9 H691.4 M431.0 422.1 H691.4 M431.0 395.3 H691.4 M431.0 368.4 H691.4 M431.0 341.6 H691.4 " stroke="#bababa" stroke-width="1.4" fill="none"/>
<rect x="434.0" y="341.6" width="257.4" height="161.0" fill="none" stroke="#bababa" stroke-width="1.5"/>
<rect x="442.2" y="380.5" width="16.0" height="122.1" fill="#004586"/><rect x="458.2" y="459.7" width="16.0" height="42.9" fill="#ff420e"/><rect x="474.2" y="441.7" width="16.0" height="60.9" fill="#ffd320"/><rect x="506.5" y="470.4" width="16.0" height="32.2" fill="#004586"/><rect x="522.5" y="384.5" width="16.0" height="118.1" fill="#ff420e"/><rect x="538.5" y="373.1" width="16.0" height="129.5" fill="#ffd320"/><rect x="570.9" y="461.0" width="16.0" height="41.6" fill="#004586"/><rect x="586.9" y="482.5" width="16.0" height="20.1" fill="#ff420e"/><rect x="602.9" y="453.0" width="16.0" height="49.6" fill="#ffd320"/><rect x="635.2" y="444.9" width="16.0" height="57.7" fill="#004586"/><rect x="651.2" y="381.6" width="16.0" height="121.0" fill="#ff420e"/><rect x="667.2" y="419.4" width="16.0" height="83.2" fill="#ffd320"/>
<path d="M434.0 502.6 v3 M498.4 502.6 v3 M562.7 502.6 v3 M627.0 502.6 v3 M691.4 502.6 v3  M434.0 502.6 H691.4" stroke="#b3b3b3" stroke-width="1" fill="none"/>
<rect x="699.4" y="413.7" width="4.4" height="4.4" fill="#004586"/><rect x="699.4" y="424.0" width="4.4" height="4.4" fill="#ff420e"/><rect x="699.4" y="434.3" width="4.4" height="4.4" fill="#ffd320"/><rect x="410.3" y="330.0" width="4" height="3.8" fill="#050505"/><rect x="576.3" y="330.0" width="4" height="3.8" fill="#050505"/><rect x="742.0" y="330.0" width="4" height="3.8" fill="#050505"/><rect x="410.3" y="424.4" width="4" height="3.8" fill="#050505"/><rect x="742.0" y="424.4" width="4" height="3.8" fill="#050505"/><rect x="410.3" y="518.7" width="4" height="3.8" fill="#050505"/><rect x="576.3" y="518.7" width="4" height="3.8" fill="#050505"/><rect x="742.0" y="518.7" width="4" height="3.8" fill="#050505"/>
</svg>
<span class="t" style="left:424.9px;top:498.0px;font-size:7.4px;color:#3a3a3a;transform:scaleX(0.899);">0</span>
<span class="t" style="left:424.9px;top:471.0px;font-size:7.4px;color:#3a3a3a;transform:scaleX(0.899);">2</span>
<span class="t" style="left:424.9px;top:444.0px;font-size:7.4px;color:#3a3a3a;transform:scaleX(0.899);">4</span>
<span class="t" style="left:424.9px;top:418.0px;font-size:7.4px;color:#3a3a3a;transform:scaleX(0.899);">6</span>
<span class="t" style="left:424.9px;top:391.0px;font-size:7.4px;color:#3a3a3a;transform:scaleX(0.899);">8</span>
<span class="t" style="left:421.2px;top:364.0px;font-size:7.4px;color:#3a3a3a;transform:scaleX(0.899);">10</span>
<span class="t" style="left:421.2px;top:337.0px;font-size:7.4px;color:#3a3a3a;transform:scaleX(0.899);">12</span>
<span class="t" style="left:456.2px;top:506.0px;font-size:7.4px;color:#3a3a3a;transform:scaleX(0.953);">Row 1</span>
<span class="t" style="left:520.5px;top:506.0px;font-size:7.4px;color:#3a3a3a;transform:scaleX(0.953);">Row 2</span>
<span class="t" style="left:584.9px;top:506.0px;font-size:7.4px;color:#3a3a3a;transform:scaleX(0.953);">Row 3</span>
<span class="t" style="left:649.2px;top:506.0px;font-size:7.4px;color:#3a3a3a;transform:scaleX(0.953);">Row 4</span>
<span class="t" style="left:706.0px;top:411.0px;font-size:7.4px;color:#3a3a3a;transform:scaleX(0.928);">Column 1</span>
<span class="t" style="left:706.0px;top:421.0px;font-size:7.4px;color:#3a3a3a;transform:scaleX(0.928);">Column 2</span>
<span class="t" style="left:706.0px;top:431.0px;font-size:7.4px;color:#3a3a3a;transform:scaleX(0.928);">Column 3</span>
<!-- SIDEBAR -->
<div class="abs" style="left:1031px;top:89px;width:240px;height:689px;background:#f0f0f0;"></div>
<div class="abs" style="left:1033px;top:118px;width:237px;height:1px;background:#e2e2e2;"></div>
<div class="abs" style="left:1032px;top:89.6px;width:276.5px;height:2.2px;background:#fafafa;"></div>
<div class="abs" style="left:1032px;top:92px;width:276.5px;height:1px;background:#e3e3e3;"></div>
<div class="abs" style="left:1270px;top:96px;width:1px;height:678px;background:#e3e3e3;"></div>
<div class="abs" style="left:1271px;top:96px;width:1px;height:678px;background:#f7f7f7;"></div>
<div class="abs" style="left:1032px;top:96px;width:60px;height:20px;overflow:hidden"><span class="t" style="left:-23.1px;top:3px;font-size:12px;font-weight:bold;transform:scaleX(0.921)">Properties</span></div>
<svg style="left:1256px;top:99px" width="10" height="10" viewBox="0 0 10 10"><path d="M0.8 0.8 L8.6 8.6 M8.6 0.8 L0.8 8.6" stroke="#444" stroke-width="1.1" fill="none"/></svg>
<div class="abs" style="left:1032px;top:122px;width:238px;height:36px;overflow:hidden"><span class="t" style="left:-29.3px;top:3px;font-size:12.2px;color:#1a1a1a;transform:scaleX(0.920)">Properties for the task that you are performing are not</span><span class="t" style="left:-29.1px;top:18px;font-size:12.2px;color:#1a1a1a;transform:scaleX(0.926)">available for the current selection</span></div>
<svg style="left:0;top:0" width="1355" height="300" viewBox="0 0 1355 300">
<circle cx="1289.3" cy="103" r="1.05" fill="#555"/><circle cx="1289.3" cy="107.4" r="1.05" fill="#555"/><circle cx="1289.3" cy="111.8" r="1.05" fill="#555"/>
<rect x="1274.6" y="129.6" width="30.2" height="29.8" rx="3.2" fill="#f3f3f3" stroke="#c6c6c6" stroke-width="1.2"/>
<rect x="1280.6" y="135.6" width="17.8" height="17.6" rx="1" fill="#fbfbfb" stroke="#747474" stroke-width="1.2"/><rect x="1280.6" y="135.6" width="17.8" height="3" fill="#747474"/><path d="M1284 143.9 H1295 M1284 147.7 H1295" stroke="#7a7a7a" stroke-width="1"/><circle cx="1290.6" cy="143.9" r="1.35" fill="#747474"/><circle cx="1288" cy="147.7" r="1.35" fill="#747474"/>
<text x="1279.6" y="183.6" font-family="Liberation Sans" font-size="21.4" fill="#5e5e5e" textLength="12.4" lengthAdjust="spacingAndGlyphs">A</text><text x="1284.6" y="184.6" font-family="Liberation Sans" font-size="20.4" font-weight="bold" fill="#3d7ebf" stroke="#f0f0f0" stroke-width="0.5" paint-order="stroke" textLength="13.2" lengthAdjust="spacingAndGlyphs">A</text><path d="M1283 186.6 H1298.8" stroke="#3d7ebf" stroke-width="1.1"/>
<path d="M1279.6 204.6 H1288.2 L1289.8 202 H1297.4 V216.8 H1279.6 Z" fill="#fdf3da" stroke="#f0cc88" stroke-width="1" stroke-linejoin="round"/><rect x="1279.4" y="205.6" width="8" height="11.6" fill="#ecc47a"/><rect x="1287.2" y="208.6" width="11.2" height="10.8" fill="#fff" stroke="#85796c" stroke-width="1.2"/><circle cx="1289.9" cy="211.4" r="1" fill="#ebbb66"/><path d="M1287.9 218.8 V216 L1290.6 214.4 L1292.6 215.8 L1295 213.4 L1297.8 216 V218.8 Z" fill="#3d7ebf"/>
<circle cx="1289.5" cy="244" r="8.9" fill="#fbfbfb" stroke="#8c8888" stroke-width="1.3"/><path d="M1294.2 239.2 L1291.8 246.2 L1284.8 248.8 L1287.2 241.8 Z" fill="#3d7ebf"/><circle cx="1289.5" cy="244" r="1.3" fill="#fff"/>
</svg>
<div class="abs" style="left:1279px;top:125px;width:21.5px;height:1px;background:#dadada;"></div>
<div class="abs" style="left:1032px;top:775.2px;width:276.5px;height:0.8px;background:#fafafa;"></div>
<div class="abs" style="left:1032px;top:776px;width:276.8px;height:1px;background:#a3a3a3;"></div>
<!-- STATUSBAR -->
<div class="abs" style="left:1px;top:777px;width:1353px;height:22px;background:#f0f0f0;"></div>
<div class="abs" style="left:1px;top:777.8px;width:1353px;height:1px;background:#a3a3a3;"></div>
<div class="abs" style="left:1px;top:778.8px;width:1353px;height:0.6px;background:#f8f8f8;"></div>
<div class="abs" style="left:1326.6px;top:780.6px;width:1px;height:16.4px;background:#fbfbfb;"></div>
<div class="abs" style="left:1327.6px;top:780.6px;width:1px;height:16.4px;background:#a3a3a3;"></div>
<!-- DIALOG -->
<div class="abs" style="left:865px;top:223px;width:366.5px;height:350.5px;background:#f0f0f0;border:1px solid #7c7c7c;box-shadow:0 4px 15px 1px rgba(0,0,0,.24),0 0 4px rgba(0,0,0,.13)"></div>
<div class="abs" style="left:866px;top:224px;width:364.5px;height:29px;background:#ffffff;"></div>
<span class="t" style="left:873.6px;top:231.0px;font-size:12.2px;color:#000;transform:scaleX(0.913);">Y Axis Major Grid</span>
<svg style="left:1210px;top:232px" width="12" height="12" viewBox="0 0 12 12"><path d="M1.4 1 L11 10.4 M11 1 L1.4 10.4" stroke="#222" stroke-width="1.1" fill="none"/></svg>
<div class="abs" style="left:873.5px;top:282px;width:347.5px;height:232.5px;background:#fff;border:1px solid #dcdcdc"></div>
<div class="abs" style="left:873.5px;top:260.5px;width:28px;height:22.5px;background:#fff;border:1px solid #dcdcdc;border-bottom:none"></div>
<span class="t" style="left:876.8px;top:265.0px;font-size:12.2px;color:#000;transform:scaleX(0.884);">Line</span>
<span class="t" style="left:881.8px;top:292.0px;font-size:12px;color:#000;transform:scaleX(0.881);font-weight:bold;">Line Properties</span>
<span class="t" style="left:893.4px;top:316.0px;font-size:12.2px;color:#000;transform:scaleX(0.862);"><u>S</u>tyle:</span>
<span class="t" style="left:893.8px;top:345.0px;font-size:12.2px;color:#000;transform:scaleX(0.879);">Colo<u>r</u>:</span>
<span class="t" style="left:892.9px;top:372.0px;font-size:12.2px;color:#000;transform:scaleX(0.960);"><u>W</u>idth:</span>
<span class="t" style="left:893.3px;top:396.0px;font-size:12.2px;color:#000;transform:scaleX(0.876);"><u>T</u>ransparency:</span>
<div class="abs" style="left:968.5px;top:312px;width:150.5px;height:21.5px;background:#0078d7;border:1px solid #7a7a7a"></div>
<div class="abs" style="left:969.5px;top:312.6px;width:132.5px;height:1.2px;background:repeating-linear-gradient(90deg,#e8f0ff 0 1px,#0a2a55 1px 2px);"></div>
<div class="abs" style="left:969.5px;top:331.2px;width:132.5px;height:1.2px;background:repeating-linear-gradient(90deg,#e8f0ff 0 1px,#0a2a55 1px 2px);"></div>
<div class="abs" style="left:969.3px;top:313px;width:1px;height:19px;background:repeating-linear-gradient(180deg,#e8f0ff 0 1px,#0a2a55 1px 2px);"></div>
<div class="abs" style="left:1101px;top:313px;width:1px;height:19px;background:repeating-linear-gradient(180deg,#e8f0ff 0 1px,#0a2a55 1px 2px);"></div>
<div class="abs" style="left:970.5px;top:316px;width:71.5px;height:13px;background:#ffffff;"></div>
<div class="abs" style="left:970.5px;top:321.2px;width:71.5px;height:1.7px;background:#6a6a6a;"></div>
<div class="abs" style="left:1046px;top:313px;width:55.6px;height:20px;overflow:hidden"><span class="t" style="left:1.6px;top:3px;font-size:12.2px;color:#fff;transform:scaleX(0.958)">Continuous</span></div>
<div class="abs" style="left:1102.5px;top:312.5px;width:16.5px;height:20.5px;background:#e1e1e1;border:1px solid #a0a0a0"></div>
<svg style="left:1105px;top:319px" width="11" height="8" viewBox="0 0 11 8"><path d="M1.2 1.8 L5.1 5.8 L9 1.8" fill="none" stroke="#505050" stroke-width="1.2"/></svg>
<div class="abs" style="left:969px;top:337.5px;width:149.5px;height:26.5px;background:#e1e1e1;border:1px solid #adadad"></div>
<div class="abs" style="left:972px;top:344px;width:29px;height:13px;background:#b3b3b3;border:1px solid #8c8c8c"></div>
<span class="t" style="left:1004.6px;top:345.0px;font-size:12.2px;color:#000;transform:scaleX(0.848);">#B3B3B3</span>
<svg style="left:1101px;top:347px" width="11" height="7" viewBox="0 0 11 7"><path d="M0.4 0.6 H10.6 L5.5 6.4 Z" fill="#111"/></svg>
<div class="abs" style="left:968.3px;top:368.3px;width:77.7px;height:20px;background:#fff;border:1px solid #b4b4b4"></div>
<span class="t" style="left:971.4px;top:372.0px;font-size:12.2px;color:#000;transform:scaleX(0.883);">0,00 cm</span>
<div class="abs" style="left:1030.4px;top:370.1px;width:13.4px;height:7.8px;background:#ececec;border:1px solid #cccccc"></div>
<div class="abs" style="left:1030.4px;top:378.7px;width:13.4px;height:7.8px;background:#ececec;border:1px solid #cccccc"></div>
<svg style="left:1034.6px;top:372.6px" width="5.4" height="3.2" viewBox="0 0 7 4"><path d="M0.2 3.8 H6.8 L3.5 0.2 Z" fill="#111"/></svg>
<svg style="left:1034.6px;top:381.0px" width="5.4" height="3.2" viewBox="0 0 7 4"><path d="M0.2 0.2 H6.8 L3.5 3.8 Z" fill="#111"/></svg>
<div class="abs" style="left:968.3px;top:391.5px;width:77.7px;height:20.5px;background:#fff;border:1px solid #b4b4b4"></div>
<span class="t" style="left:971.4px;top:396.0px;font-size:12.2px;color:#000;transform:scaleX(0.847);">0 %</span>
<div class="abs" style="left:1030.4px;top:393.3px;width:13.4px;height:8.0px;background:#ececec;border:1px solid #cccccc"></div>
<div class="abs" style="left:1030.4px;top:402.1px;width:13.4px;height:8.0px;background:#ececec;border:1px solid #cccccc"></div>
<svg style="left:1034.6px;top:395.9px" width="5.4" height="3.2" viewBox="0 0 7 4"><path d="M0.2 3.8 H6.8 L3.5 0.2 Z" fill="#111"/></svg>
<svg style="left:1034.6px;top:404.6px" width="5.4" height="3.2" viewBox="0 0 7 4"><path d="M0.2 0.2 H6.8 L3.5 3.8 Z" fill="#111"/></svg>
<div class="abs" style="left:893px;top:429.3px;width:321.5px;height:78px;background:#fff;border:1px solid #9c9c9c;border-radius:1.5px"></div>
<svg style="left:0;top:0" width="1355" height="800" viewBox="0 0 1355 800"><path d="M912.4 468.6 H1086 M1103.4 488 L1128.5 449.8 L1153.6 488 M1170.7 488 L1183.3 449.8 L1196.2 488" fill="none" stroke="#b3b3b3" stroke-width="1"/></svg>
<div class="abs" style="left:879.2px;top:533px;width:78.6px;height:26.5px;background:#e1e1e1;border:1px solid #adadad"></div>
<span class="t" style="left:906.4px;top:540.0px;font-size:12.2px;color:#000;transform:scaleX(0.945);"><u>H</u>elp</span>
<div class="abs" style="left:965.3px;top:533px;width:78.6px;height:26.5px;background:#e1e1e1;border:1px solid #adadad"></div>
<span class="t" style="left:991.3px;top:540.0px;font-size:12.2px;color:#000;transform:scaleX(0.825);"><u>R</u>eset</span>
<div class="abs" style="left:1052.2px;top:533px;width:78.6px;height:26.5px;background:#e1e1e1;border:2px solid #0078d7"></div>
<span class="t" style="left:1083.6px;top:540.0px;font-size:12.2px;color:#000;transform:scaleX(0.840);"><u>O</u>K</span>
<div class="abs" style="left:1138.3px;top:533px;width:78.8px;height:26.5px;background:#e1e1e1;border:1px solid #adadad"></div>
<span class="t" style="left:1161.6px;top:540.0px;font-size:12.2px;color:#000;transform:scaleX(0.861);"><u>C</u>ancel</span>
<div class="abs" style="left:0px;top:0px;width:1355px;height:1px;background:#5c5c5c;"></div>
<div class="abs" style="left:0px;top:0px;width:1px;height:16px;background:#7c7c7c;"></div>
<div class="abs" style="left:0px;top:16px;width:1px;height:784px;background:#2b2e2a;"></div>
<div class="abs" style="left:1354px;top:0px;width:1px;height:15px;background:#505050;"></div>
<div class="abs" style="left:1354px;top:15px;width:1px;height:785px;background:#9c9c9c;"></div>
<div class="abs" style="left:0px;top:799px;width:1355px;height:1px;background:#767676;"></div>
</div>
</body>
</html>
